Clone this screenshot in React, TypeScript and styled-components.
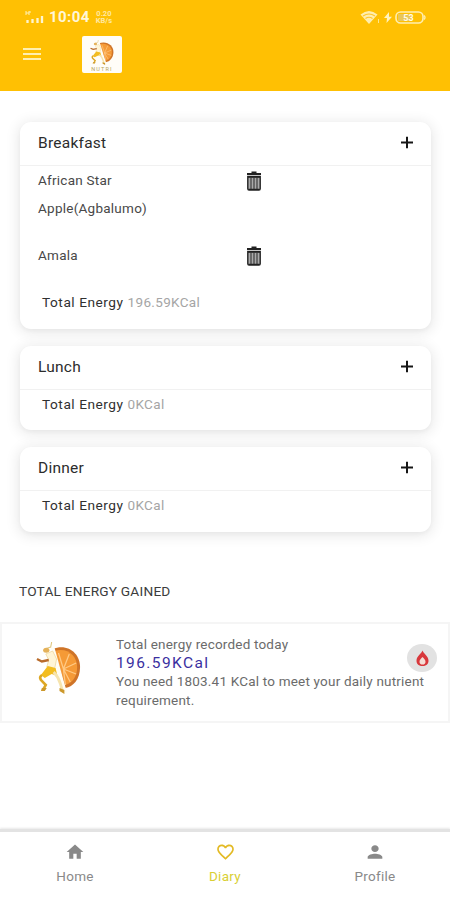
import React from "react";
import styled, { createGlobalStyle } from "styled-components";

const Global = createGlobalStyle`
  * { box-sizing: border-box; }
  body { margin: 0; background: #fff; font-family: Roboto, "Liberation Sans", sans-serif; }
`;

const Screen = styled.div`
  width: 450px;
  height: 900px;
  overflow: hidden;
  display: flex;
  flex-direction: column;
  background: #fff;
`;

const TopBar = styled.header`
  height: 91px;
  flex: none;
  background: #ffc003;
  color: #fff7d8;
`;

const StatusBar = styled.div`
  height: 34px;
  padding: 0 24px 0 25px;
  display: flex;
  align-items: center;
  justify-content: space-between;
`;

const StatusGroup = styled.div<{ $gap: number }>`
  display: flex;
  align-items: center;
  gap: ${(p) => p.$gap}px;
`;

const Clock = styled.span`
  font-size: 15px;
  line-height: 18px;
  font-weight: 700;
  letter-spacing: 0.45px;
`;

const Speed = styled.span`
  font-size: 7.5px;
  line-height: 7.5px;
  font-weight: 700;
  width: 18px;
  text-align: center;
  opacity: 0.75;
`;

const Toolbar = styled.div`
  height: 40px;
  padding-left: 23px;
  display: flex;
  align-items: center;
  gap: 41px;
`;

const MenuButton = styled.div`
  width: 18px;
  height: 12px;
  display: flex;
  flex-direction: column;
  justify-content: space-between;

  span {
    height: 2px;
    background: #ffefb0;
  }
`;

const LogoTile = styled.div`
  width: 40px;
  height: 37px;
  border-radius: 2px;
  background: #fffdf8;
  display: flex;
  flex-direction: column;
  align-items: center;
  padding-top: 4px;
`;

const LogoName = styled.span`
  font-size: 5.5px;
  line-height: 6px;
  letter-spacing: 1.2px;
  color: #b7a45e;
`;

const Meals = styled.main`
  flex: none;
  padding: 31px 19px 0 20px;
  display: flex;
  flex-direction: column;
  gap: 17px;
`;

const Card = styled.section<{ $height: number }>`
  height: ${(p) => p.$height}px;
  border-radius: 11px;
  background: #fff;
  box-shadow: 0 2px 14px 2px rgba(0, 0, 0, 0.09), 0 2px 4px rgba(0, 0, 0, 0.03);
`;

const CardHeader = styled.div`
  height: 44px;
  padding: 0 18px 2px;
  display: flex;
  align-items: center;
  justify-content: space-between;
  border-bottom: 1px solid #f1f1f1;
`;

const CardTitle = styled.h2`
  margin: 0;
  font-size: 15.5px;
  line-height: 20px;
  font-weight: 400;
  letter-spacing: 0.25px;
  color: #2c2c2c;
`;

const FoodRow = styled.div<{ $height: number }>`
  height: ${(p) => p.$height}px;
  padding-left: 18px;
  display: grid;
  grid-template-columns: 207.5px 16px;
  align-items: start;

  svg {
    margin-top: 5px;
  }
`;

const FoodName = styled.span`
  width: 125px;
  font-size: 13.5px;
  line-height: 28px;
  letter-spacing: 0.25px;
  color: #484848;
`;

const Energy = styled.div`
  padding: 4px 0 0 22px;
  font-size: 13.7px;
  line-height: 20px;
  letter-spacing: 0.53px;
  color: #303030;

  span {
    font-size: 13.5px;
    letter-spacing: 0.35px;
    color: #a5a5a5;
  }
`;

const SectionTitle = styled.h3`
  margin: 50px 0 0 19px;
  font-size: 13.7px;
  line-height: 18px;
  font-weight: 400;
  letter-spacing: 0.2px;
  color: #3c3c3c;
`;

const Summary = styled.section`
  flex: none;
  height: 101px;
  margin-top: 22px;
  border: 2px solid #f5f5f5;
  display: grid;
  grid-template-columns: 114px 1fr;
`;

const SummaryArt = styled.div`
  padding: 18px 0 0 34px;
`;

const SummaryText = styled.div`
  padding-top: 11px;
  font-size: 13.5px;
  line-height: 19px;
  letter-spacing: 0.2px;
  color: #6b6b6b;
  position: relative;
`;

const SummaryValue = styled.div`
  font-size: 15.5px;
  line-height: 18px;
  letter-spacing: 1.4px;
  color: #3a2fa0;
`;

const FlameBadge = styled.div`
  position: absolute;
  right: 11px;
  top: 20px;
  width: 30px;
  height: 28px;
  border-radius: 50%;
  background: #e2e2e2;
  display: flex;
  align-items: center;
  justify-content: center;
`;

const BottomNav = styled.nav`
  flex: none;
  height: 71px;
  margin-top: auto;
  border-top: 3px solid #e3e3e3;
  box-shadow: 0 -1px 2px #e8e8e8;
  display: grid;
  grid-template-columns: repeat(3, 1fr);
`;

const NavItem = styled.div<{ $color: string }>`
  color: ${(p) => p.$color};
  padding-top: 10px;
  display: flex;
  flex-direction: column;
  align-items: center;
  gap: 5px;
  font-size: 13.5px;
  line-height: 18px;
  letter-spacing: 0.3px;
`;

const Plus = () => (
  <svg width="13" height="13" viewBox="0 0 13 13">
    <path d="M7 .7v11.6M1 6.5h12" stroke="#161616" strokeWidth="2" fill="none" />
  </svg>
);

const Trash = () => (
  <svg width="16" height="20" viewBox="0 0 16 20">
    <path d="M1 3h14M5.5 1.5h5" stroke="#222" strokeWidth="2" />
    <path d="M1.8 5.5h12.4v12.3q0 1.2-1.2 1.2H3q-1.2 0-1.2-1.2z" fill="#aaa" stroke="#222" strokeWidth="1.4" />
    <path d="M2 6h12M2.5 18.4h11" stroke="#222" strokeWidth="1.4" />
    <path d="M5 6v12M8 6v12M11 6v12" stroke="#333" strokeWidth="1.1" />
  </svg>
);

const OrangeRunner = ({ width, height }: { width: number; height: number }) => (
  <svg width={width} height={height} viewBox="0 0 48 54" preserveAspectRatio="none">
    <path d="M17 7C33 1 45 12 45 25c0 12-7 20-15 21z" fill="#cf7428" />
    <path d="M19 9c13-4 23 5 23 16 0 10-5 16-12 18z" fill="#f59a36" />
    <path d="M28 27L23 11M28 27l6-15M28 27l13-6M28 27l13 5M28 27l7 13M28 27l2 16" stroke="#ffc984" strokeWidth="1.3" />
    <path d="M15 5l4 1 13 46-6-5z" fill="#fffdf3" />
    <path d="M9 7l6-2 1-5" stroke="#dfc67e" strokeWidth="1.1" fill="none" />
    <ellipse cx="10.500" cy="8.300" rx="3.200" ry="2.500" fill="#e5b25a" />
    <path d="M10 12l7-3 4 8-2 10-8-2 2-7z" fill="#fff5d6" stroke="#ecd495" strokeWidth=".7" />
    <path d="M1 17l5 2.500 7-1.500" stroke="#b96b2b" strokeWidth="2.400" fill="none" />
    <path d="M12 24l8 2 2 8-6-2-7 4-4-3z" fill="#f3bd20" />
    <path d="M6 33q-3 2-1 5l5 5-3 5" stroke="#dda724" strokeWidth="2.600" fill="none" />
    <path d="M18 30q5 5 7 12l2 7" stroke="#f6e4ae" strokeWidth="2.800" fill="none" />
    <path d="M6 46l5 0-2 3-4 0zM24 46l5 2v4l-5-3z" fill="#cc982b" />
  </svg>
);

const Flame = () => (
  <svg width="13" height="17" viewBox="0 0 13 17">
    <path d="M6.500 .5C7.300 3.500 12.500 6 12.500 10.700c0 3.400-2.600 5.300-6 5.300s-6-1.900-6-5.300C.5 6 5.700 3.500 6.500.5z" fill="#d8373b" />
    <path d="M6.500 7c1.300 1.500 3 2.800 3 4.700a3 2.800 0 01-6 0c0-1.900 1.700-3.200 3-4.700z" fill="#f4ddd5" />
  </svg>
);

const Signal = () => (
  <svg width="19" height="15" viewBox="0 0 19 15">
    <path d="M1 1v4M4 1v4M1 3h3M5 1v2" stroke="#fff0b5" strokeWidth="1" />
    <path d="M2.500 10v3M7.500 9v4M12.500 8v5M17 6v7" stroke="#fff5cf" strokeWidth="2.300" />
  </svg>
);

const Wifi = () => (
  <svg width="21" height="15" viewBox="0 0 21 15">
    <path d="M0.500 4.500Q9 -2.500 17.500 4.500L9 14z" fill="#ffeeae" />
    <path d="M3 6q6-4 12 0M5.500 8.500q3.500-2.500 7 0" stroke="#ffc52a" strokeWidth="1.200" fill="none" />
    <path d="M18.500 9v4" stroke="#ffe68c" strokeWidth="1" />
  </svg>
);

const Bolt = () => (
  <svg width="8" height="11" viewBox="0 0 8 11">
    <path d="M5 0L0 6h3L2.500 11 8 4.700H5z" fill="#fff3c0" />
  </svg>
);

const Battery = () => (
  <svg width="31" height="13" viewBox="0 0 31 13">
    <rect x="1" y="1" width="27" height="11" rx="4.500" fill="none" stroke="#ffeeb0" strokeWidth="1.600" />
    <path d="M3 3h13v7H3z" fill="#e9c75a" />
    <path d="M29 4.500q2 2 0 4" stroke="#ffeeb0" strokeWidth="1.300" fill="none" />
    <text x="13.500" y="9.800" textAnchor="middle" fontFamily="Roboto" fontWeight="700" fontSize="9" fill="#fffbe8">53</text>
  </svg>
);

const HomeIcon = () => (
  <svg width="20" height="20" viewBox="0 0 24 24" fill="currentColor">
    <path d="M10 20v-6h4v6h5v-8h3L12 3 2 12h3v8z" />
  </svg>
);

const HeartIcon = () => (
  <svg width="21" height="20" viewBox="0 0 24 24" fill="#e3ba24">
    <path d="M16.500 3c-1.740 0-3.410.81-4.500 2.090C10.910 3.810 9.240 3 7.500 3 4.420 3 2 5.420 2 8.500c0 3.780 3.400 6.860 8.550 11.540L12 21.350l1.450-1.320C18.600 15.360 22 12.280 22 8.500 22 5.420 19.580 3 16.500 3zm-4.400 15.550l-.1.100-.1-.1C7.140 14.240 4 11.390 4 8.500 4 6.500 5.500 5 7.500 5c1.540 0 3.040.99 3.570 2.360h1.870C13.460 5.990 14.960 5 16.500 5c2 0 3.500 1.500 3.500 3.500 0 2.890-3.140 5.740-7.900 10.050z" />
  </svg>
);

const PersonIcon = () => (
  <svg width="22" height="20" viewBox="0 0 24 24" fill="currentColor" preserveAspectRatio="none">
    <path d="M12 12c2.210 0 4-1.790 4-4s-1.790-4-4-4-4 1.790-4 4 1.790 4 4 4zm0 2c-2.670 0-8 1.340-8 4v2h16v-2c0-2.660-5.330-4-8-4z" />
  </svg>
);

type Food = { name: string; height: number };
type Meal = { title: string; height: number; foods: Food[]; energy: string };

const meals: Meal[] = [
  {
    title: "Breakfast",
    height: 207,
    foods: [
      { name: "African Star Apple(Agbalumo)", height: 75 },
      { name: "Amala", height: 47 },
    ],
    energy: "196.59KCal",
  },
  { title: "Lunch", height: 84, foods: [], energy: "0KCal" },
  { title: "Dinner", height: 85, foods: [], energy: "0KCal" },
];

export default function App() {
  return (
    <Screen>
      <Global />
      <TopBar>
        <StatusBar>
          <StatusGroup $gap={5}>
            <Signal />
            <Clock>10:04</Clock>
            <Speed>0.20 KB/s</Speed>
          </StatusGroup>
          <StatusGroup $gap={3}>
            <Wifi />
            <Bolt />
            <Battery />
          </StatusGroup>
        </StatusBar>
        <Toolbar>
          <MenuButton>
            <span />
            <span />
            <span />
          </MenuButton>
          <LogoTile>
            <OrangeRunner width={25} height={26} />
            <LogoName>NUTRI</LogoName>
          </LogoTile>
        </Toolbar>
      </TopBar>
      <Meals>
        {meals.map((meal) => (
          <Card key={meal.title} $height={meal.height}>
            <CardHeader>
              <CardTitle>{meal.title}</CardTitle>
              <Plus />
            </CardHeader>
            {meal.foods.map((food) => (
              <FoodRow key={food.name} $height={food.height}>
                <FoodName>{food.name}</FoodName>
                <Trash />
              </FoodRow>
            ))}
            <Energy>
              Total Energy <span>{meal.energy}</span>
            </Energy>
          </Card>
        ))}
      </Meals>
      <SectionTitle>TOTAL ENERGY GAINED</SectionTitle>
      <Summary>
        <SummaryArt>
          <OrangeRunner width={47} height={54} />
        </SummaryArt>
        <SummaryText>
          Total energy recorded today
          <SummaryValue>196.59KCal</SummaryValue>
          You need 1803.41 KCal to meet your daily nutrient requirement.
          <FlameBadge>
            <Flame />
          </FlameBadge>
        </SummaryText>
      </Summary>
      <BottomNav>
        <NavItem $color="#898989">
          <HomeIcon />
          Home
        </NavItem>
        <NavItem $color="#d9cf35">
          <HeartIcon />
          Diary
        </NavItem>
        <NavItem $color="#898989">
          <PersonIcon />
          Profile
        </NavItem>
      </BottomNav>
    </Screen>
  );
}
